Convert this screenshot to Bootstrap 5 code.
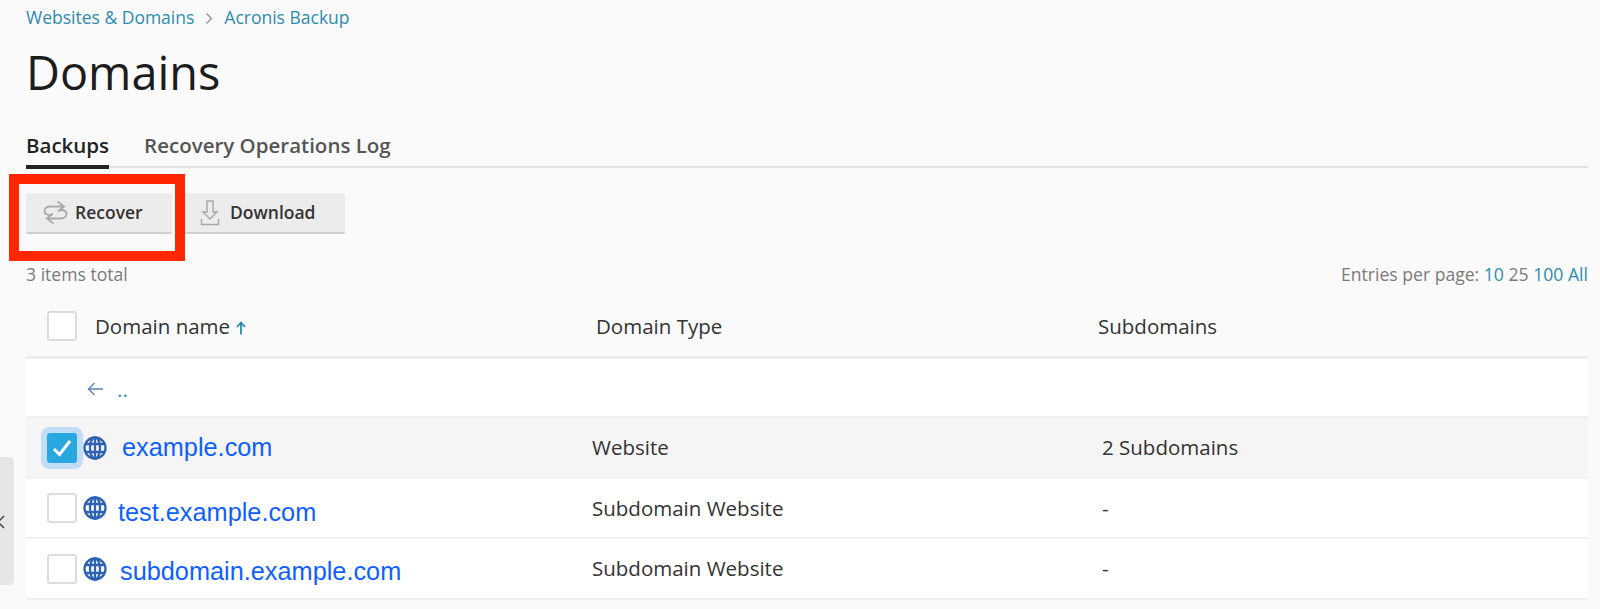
<!DOCTYPE html>
<html lang="en">
<head>
<meta charset="utf-8">
<title>Domains</title>
<link href="https://cdn.jsdelivr.net/npm/bootstrap@5.3.0/dist/css/bootstrap.min.css" rel="stylesheet">
<script src="https://cdn.jsdelivr.net/npm/bootstrap@5.3.0/dist/js/bootstrap.bundle.min.js"></script>
<style>
html,body{height:609px;overflow:hidden}
body{background:#fafafa;font-family:"Open Sans",sans-serif;color:#222;position:relative}
.pg{padding:0 12px 0 26px}
.crumbs{font-size:17.5px;height:34px;padding-top:6px;line-height:22px;color:#2f8ab0}
.crumbs a,.perpage a{color:#2f8ab0;text-decoration:none}
.crumbs svg{margin:0 11px 0 11px;vertical-align:-1px}
.ttl{font-size:46.8px;font-weight:400;line-height:64px;margin:6px 0 0;height:86px;color:#1c1c1c}
.tabsbar{border-bottom:2px solid #e2e2e2;height:42px;gap:35px;font-size:20.5px;font-weight:600;color:#555;line-height:26px}
.tabsbar .on{color:#222;border-bottom:4px solid #222;height:43px;padding-top:6px}
.tabsbar .off{padding-top:6px}
.tools{margin-top:25px;gap:12px;height:41px}
.tbtn{background:#ececec;border:0;border-bottom:2px solid #cfcfcf;border-radius:2px;height:41px;font-size:17.5px;font-weight:600;color:#333;padding:0 0 0 17px;display:flex;align-items:center;gap:7px;line-height:1}
.tbtn.rec{width:146px}
.tbtn.dl{width:161px;padding-left:16px;gap:10px}
.info{font-size:17.6px;color:#7b7b7b;margin-top:29px;height:24px;line-height:22px;margin-bottom:0}
.perpage .cur{color:#7b7b7b}
.grid{width:100%;table-layout:fixed;margin:0;border-collapse:collapse}
.grid th{font-weight:400;font-size:20.5px;color:#333;height:70px;border-bottom:3px solid #ececec;padding:10px 0 0;vertical-align:middle;background:#fafafa}
.grid td{background:#fff;font-size:20.5px;color:#333;border-bottom:2px solid #f1f1f1;padding:0;vertical-align:middle;height:60px}
.grid tr.tall td{height:61px}
.grid tr.sel td{background:#f5f5f5}
.grid .c2h{padding-left:4px}
.grid .c3b{padding-left:4px}
.cbox{display:block;width:30px;height:30px;background:#fff;border:2px solid #dcdcdc;border-radius:3px;margin-left:21px;flex:none}
.cbox.chk{background:#29a8e0;border:0;box-shadow:0 0 0 6px #c2def6;display:flex;align-items:center;justify-content:center}
.namecell{display:flex;align-items:center}
.hd-name{margin-left:18px}
.uparrow{margin-left:6px;vertical-align:-1px}
.globe{flex:none;margin-left:6px}
.dlink{font-family:"Liberation Sans",Arial,sans-serif;font-size:25.3px;color:#0f5fff;text-decoration:none;line-height:30px}
.l1{margin-left:15px;margin-bottom:2px}
.l2{margin-left:11px;margin-top:8px}
.l3{margin-left:13px;margin-top:4px}
.back{display:flex;align-items:center;padding:3px 0 0 61px;gap:13px}
.dots{color:#2f8ab0;font-size:20.5px;line-height:1}
.redbox{position:absolute;left:9px;top:174px;width:176px;height:87px;border:10px solid #ff2600;pointer-events:none}
.sidetab{position:absolute;left:0;top:457px;width:14px;height:128px;background:#e6e6e6;border-radius:0 4px 4px 0;overflow:hidden}
.sidetab svg{position:absolute;left:-5px;top:58px}
</style>
</head>
<body>
<div class="pg">
  <div class="crumbs"><a href="#">Websites &amp; Domains</a><svg width="8" height="13" viewBox="0 0 8 13"><path d="M1.500 1.500l5 5-5 5" fill="none" stroke="#8a8a8a" stroke-width="1.200"/></svg><a href="#">Acronis Backup</a></div>
  <h1 class="ttl">Domains</h1>
  <div class="tabsbar d-flex">
    <div class="on">Backups</div>
    <div class="off">Recovery Operations Log</div>
  </div>
  <div class="tools d-flex">
    <button class="tbtn rec" type="button">
      <svg width="25" height="25" viewBox="0 0 25 25" fill="none" stroke="#a9a9a9" stroke-width="1.800"><path d="M14.500 1.500L21 6.500 15 11.500M21 6.500H7.500C4 6.500 1.500 8.500 1.500 11S4 15 7.500 15H9"/><path d="M10.500 23.500L4 18.500 10 13.500M4 18.500H17.500C21 18.500 23.500 16.500 23.500 14S21 10 17.500 10H16"/></svg>
      Recover
    </button>
    <button class="tbtn dl" type="button">
      <svg width="20" height="26" viewBox="0 0 20 26" fill="none" stroke="#a6a6a6" stroke-width="1.400"><path d="M7 1h6v11h4l-7 7-7-7h4z"/><path d="M1.500 19v5.500h17V19"/></svg>
      Download
    </button>
  </div>
  <div class="info d-flex justify-content-between">
    <span>3 items total</span>
    <span class="perpage">Entries per page: <a href="#">10</a> <span class="cur">25</span> <a href="#">100</a> <a href="#">All</a></span>
  </div>
  <table class="grid">
    <colgroup><col style="width:566px"><col style="width:506px"><col></colgroup>
    <thead>
      <tr>
        <th><div class="namecell"><span class="cbox"></span><span class="hd-name">Domain name<svg class="uparrow" width="10" height="14" viewBox="0 0 10 14" fill="none" stroke="#2f8ab0" stroke-width="1.800"><path d="M5 13.500V2M1 6l4-4.500L9 6"/></svg></span></div></th>
        <th class="c2h">Domain Type</th>
        <th>Subdomains</th>
      </tr>
    </thead>
    <tbody>
      <tr>
        <td><div class="back"><svg width="17" height="14" viewBox="0 0 17 14" fill="none" stroke="#5b84b8" stroke-width="1.400"><path d="M16 7H1.500M7.500 1l-6 6 6 6"/></svg><span class="dots">..</span></div></td>
        <td></td><td></td>
      </tr>
      <tr class="sel tall">
        <td><div class="namecell"><span class="cbox chk"><svg width="20" height="18" viewBox="0 0 20 18" fill="none" stroke="#fff" stroke-width="3"><path d="M2 10l5.500 5.500L18 2"/></svg></span>
          <svg class="globe" width="24" height="24" viewBox="0 0 24 24" fill="none" stroke="#2d62b5" stroke-width="2.300"><circle cx="12" cy="12" r="10.500"/><ellipse cx="12" cy="12" rx="5" ry="10.500"/><path d="M2 8h20M2 16h20M12 1.500v21"/></svg>
          <a class="dlink l1" href="#">example.com</a></div></td>
        <td>Website</td>
        <td class="c3b">2 Subdomains</td>
      </tr>
      <tr>
        <td><div class="namecell"><span class="cbox"></span>
          <svg class="globe" width="24" height="24" viewBox="0 0 24 24" fill="none" stroke="#2d62b5" stroke-width="2.300"><circle cx="12" cy="12" r="10.500"/><ellipse cx="12" cy="12" rx="5" ry="10.500"/><path d="M2 8h20M2 16h20M12 1.500v21"/></svg>
          <a class="dlink l2" href="#">test.example.com</a></div></td>
        <td>Subdomain Website</td>
        <td class="c3b">-</td>
      </tr>
      <tr class="tall">
        <td><div class="namecell"><span class="cbox"></span>
          <svg class="globe" width="24" height="24" viewBox="0 0 24 24" fill="none" stroke="#2d62b5" stroke-width="2.300"><circle cx="12" cy="12" r="10.500"/><ellipse cx="12" cy="12" rx="5" ry="10.500"/><path d="M2 8h20M2 16h20M12 1.500v21"/></svg>
          <a class="dlink l3" href="#">subdomain.example.com</a></div></td>
        <td>Subdomain Website</td>
        <td class="c3b">-</td>
      </tr>
    </tbody>
  </table>
</div>
<div class="redbox"></div>
<div class="sidetab"><svg width="12" height="14" viewBox="0 0 12 14" fill="none" stroke="#444" stroke-width="1.500"><path d="M9 1l-6 6 6 6"/></svg></div>
</body>
</html>
